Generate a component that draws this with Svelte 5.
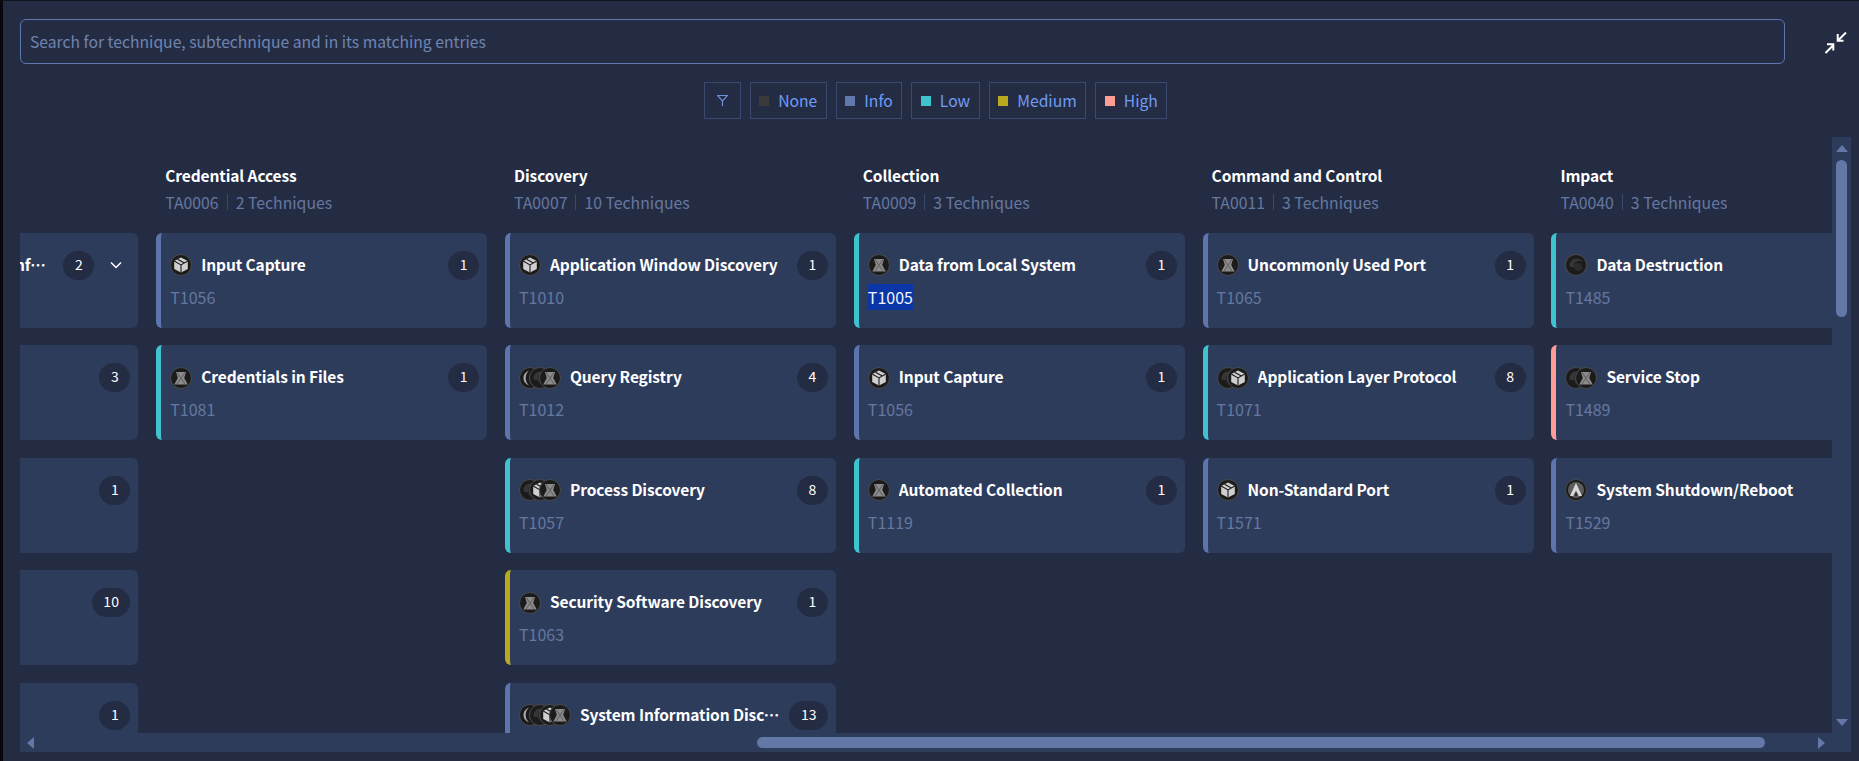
<script>
  const levels = [
    { name: 'None', color: '#3a3a3a' },
    { name: 'Info', color: '#6078ae' },
    { name: 'Low', color: '#3fc4cf' },
    { name: 'Medium', color: '#b8a91e' },
    { name: 'High', color: '#ff9d94' }
  ];

  const sev = { info: '#5d75ac', low: '#3fc4cf', medium: '#b8a91e', high: '#ff9d94' };

  const columns = [
    {
      title: 'Defense Evasion',
      sub: 'TA0005',
      count: '5 Techniques',
      items: [
        { name: 'Obfuscated Files or Information', id: 'T1027', n: 2, chevron: true, icons: ['swirl', 'x'], color: sev.info },
        { name: 'Masquerading', id: 'T1036', n: 3, icons: ['x'], color: sev.info },
        { name: 'Timestomp', id: 'T1070', n: 1, icons: ['x'], color: sev.info },
        { name: 'Process Injection', id: 'T1055', n: 10, icons: ['x'], color: sev.info },
        { name: 'Rootkit', id: 'T1014', n: 1, icons: ['x'], color: sev.info }
      ]
    },
    {
      title: 'Credential Access',
      sub: 'TA0006',
      count: '2 Techniques',
      items: [
        { name: 'Input Capture', id: 'T1056', n: 1, icons: ['box'], color: sev.info },
        { name: 'Credentials in Files', id: 'T1081', n: 1, icons: ['x'], color: sev.low }
      ]
    },
    {
      title: 'Discovery',
      sub: 'TA0007',
      count: '10 Techniques',
      items: [
        { name: 'Application Window Discovery', id: 'T1010', n: 1, icons: ['box'], color: sev.info },
        { name: 'Query Registry', id: 'T1012', n: 4, icons: ['moon', 'swirl', 'x'], color: sev.info },
        { name: 'Process Discovery', id: 'T1057', n: 8, icons: ['swirl', 'box', 'x'], color: sev.low },
        { name: 'Security Software Discovery', id: 'T1063', n: 1, icons: ['x'], color: sev.medium },
        { name: 'System Information Discovery', id: 'T1082', n: 13, icons: ['moon', 'swirl', 'box', 'x'], color: sev.info }
      ]
    },
    {
      title: 'Collection',
      sub: 'TA0009',
      count: '3 Techniques',
      items: [
        { name: 'Data from Local System', id: 'T1005', n: 1, icons: ['x'], color: sev.low, picked: true },
        { name: 'Input Capture', id: 'T1056', n: 1, icons: ['box'], color: sev.info },
        { name: 'Automated Collection', id: 'T1119', n: 1, icons: ['x'], color: sev.low }
      ]
    },
    {
      title: 'Command and Control',
      sub: 'TA0011',
      count: '3 Techniques',
      items: [
        { name: 'Uncommonly Used Port', id: 'T1065', n: 1, icons: ['x'], color: sev.info },
        { name: 'Application Layer Protocol', id: 'T1071', n: 8, icons: ['swirl', 'box'], color: sev.low },
        { name: 'Non-Standard Port', id: 'T1571', n: 1, icons: ['box'], color: sev.info }
      ]
    },
    {
      title: 'Impact',
      sub: 'TA0040',
      count: '3 Techniques',
      items: [
        { name: 'Data Destruction', id: 'T1485', n: 1, icons: ['swirl'], color: sev.low },
        { name: 'Service Stop', id: 'T1489', n: 1, icons: ['swirl', 'x'], color: sev.high },
        { name: 'System Shutdown/Reboot', id: 'T1529', n: 1, icons: ['a'], color: sev.info }
      ]
    }
  ];
</script>

<div class="page">
  <div class="search-row">
    <input class="search" placeholder="Search for technique, subtechnique and in its matching entries" />
    <button class="collapse" aria-label="collapse">
      <svg width="22" height="22" viewBox="0 0 22 22" fill="none" stroke="#fff" stroke-width="2">
        <path d="M21 .500 13 8.500M12.700 2V8.700H18.500" />
        <path d="M.500 21 8.500 13M2 12.300H8.300V18.500" />
      </svg>
    </button>
  </div>

  <div class="filters">
    <button class="chip icon-chip" aria-label="filter">
      <svg width="11" height="11" viewBox="0 0 11 11" fill="none" stroke="#6a8fd8" stroke-width="1.200">
        <path d="M.5.5h10L5.500 6zM5.500 6v5" />
      </svg>
    </button>
    {#each levels as l}
      <button class="chip">
        <span class="dot" style="background:{l.color}"></span>{l.name}
      </button>
    {/each}
  </div>

  <div class="board">
    <div class="viewport">
      <div class="columns">
        {#each columns as col}
          <section class="column">
            <header class="col-head">
              <div class="col-title">{col.title}</div>
              <div class="col-sub">
                <span>{col.sub}</span>
                <i class="sep"></i>
                <span>{col.count}</span>
              </div>
            </header>
            <div class="cards">
              {#each col.items as item}
                <article class="card" style="border-left-color:{item.color}">
                  <div class="card-top">
                    <div class="icons">
                      {#each item.icons as ic}
                        <svg class="logo" viewBox="0 0 22 22">
                          <circle cx="11" cy="11" r="10.500" fill="#1b1b1b" stroke="#4a4a4a" stroke-width="1" />
                          {#if ic === 'x'}
                            <path d="M6 5h10l-1.800 6 3.500 6.500H4.300L7.800 11z" fill="#8c8c8c" />
                            <path d="M7 5.500 15 17M15 5.500 7 17" stroke="#666" stroke-width="1.200" />
                          {:else if ic === 'box'}
                            <path d="M11 3.500l6.800 3.600v7.800L11 18.500l-6.800-3.600V7.100z" fill="#cfcfcf" />
                            <path d="M4.200 7.100 11 10.900l6.800-3.800M11 10.900v7.600M7.600 5.300l6.800 3.800" stroke="#1b1b1b" stroke-width="1.100" fill="none" />
                          {:else if ic === 'swirl'}
                            <path d="M4.500 12.500C4 7.500 8 4 12.500 4.500c3 .3 4.800 2.300 5 4.400-1.500-1.800-4.200-2.400-6.400-1.100-1.900 1.100-2.300 3.700-.9 5.300-1.900.4-4.300-.2-5.700-.6z" fill="#363636" />
                            <circle cx="13" cy="13" r="4" fill="#2b2b2b" />
                          {:else if ic === 'moon'}
                            <path d="M10 3.500C6 5.200 4.500 8.200 4.500 11s1.500 5.800 5.500 7.500C7.800 16.300 6.700 13.700 6.700 11S7.800 5.700 10 3.500z" fill="#a8a8a8" />
                            <path d="M13.500 5.500c-1.800 1.700-2.700 3.600-2.700 5.500s.9 3.800 2.700 5.500" stroke="#6a6a6a" stroke-width="1.300" fill="none" />
                          {:else}
                            <circle cx="11" cy="11" r="8" fill="#5c5c5c" />
                            <path d="M11 4 17 17h-3.200L11 11.500 8.200 17H5z" fill="#d8d8d8" />
                            <path d="M11 13l-1.300 3.500h2.600z" fill="#1b1b1b" />
                          {/if}
                        </svg>
                      {/each}
                    </div>
                    <div class="name">{item.name}</div>
                    <div class="badge">{item.n}</div>
                    {#if item.chevron}
                      <svg class="chevron" width="14" height="14" viewBox="0 0 14 14" fill="none" stroke="#fff" stroke-width="1.500">
                        <path d="M2 4.500 7 9.500 12 4.500" />
                      </svg>
                    {/if}
                  </div>
                  <div class="tid"><span class:picked={item.picked}>{item.id}</span></div>
                </article>
              {/each}
            </div>
          </section>
        {/each}
      </div>
    </div>

    <div class="vbar">
      <span class="arrow up"></span>
      <div class="vtrack"><div class="vthumb"></div></div>
      <span class="arrow down"></span>
    </div>
    <div class="hbar">
      <span class="arrow left"></span>
      <div class="htrack"><div class="hthumb"></div></div>
      <span class="arrow right"></span>
    </div>
    <div class="corner"></div>
  </div>
</div>

<style>
  :global(body) {
    margin: 0;
    background: #242c44;
  }
  .page {
    box-sizing: border-box;
    height: 761px;
    overflow: hidden;
    background: #242c44;
    border-left: 3px solid #08090d;
    border-top: 1px solid #10131d;
    font-family: "Noto Sans CJK JP", "Noto Sans", sans-serif;
    font-size: 16px;
    color: #fff;
  }
  .search-row {
    display: flex;
    align-items: center;
    padding: 18px 0 0 17px;
  }
  .search {
    box-sizing: border-box;
    width: 1765px;
    height: 45px;
    padding: 0 9px 1px;
    background: transparent;
    border: 1px solid #5c77ad;
    border-radius: 6px;
    color: #fff;
    font: inherit;
    font-size: 15.7px;
    outline: none;
  }
  .search::placeholder {
    color: #6f84b0;
    opacity: 1;
  }
  .collapse {
    display: flex;
    margin: 2px 0 0 40px;
    padding: 0;
    background: none;
    border: 0;
  }
  .filters {
    display: flex;
    justify-content: center;
    gap: 9px;
    margin: 18px 8px 0 17px;
  }
  .chip {
    display: flex;
    align-items: center;
    gap: 9px;
    box-sizing: border-box;
    height: 37px;
    padding: 0 8.5px;
    background: transparent;
    border: 1px solid #3a4a6e;
    color: #6f9cf5;
    font: inherit;
    font-size: 15.7px;
  }
  .icon-chip {
    width: 37px;
    justify-content: center;
    padding: 0;
  }
  .dot {
    width: 10px;
    height: 10px;
  }
  .board {
    display: grid;
    grid-template-columns: 1812px 19px;
    grid-template-rows: 596px 19px;
    margin: 18px 0 0 17px;
  }
  .viewport {
    overflow: hidden;
  }
  .columns {
    display: flex;
    gap: 17.8px;
    margin-left: -212.6px;
  }
  .column {
    flex: 0 0 331px;
    min-width: 0;
  }
  .col-head {
    box-sizing: border-box;
    height: 95.8px;
    padding: 25px 0 0 9px;
  }
  .col-title {
    height: 26px;
    line-height: 26px;
    font-size: 15.5px;
    font-weight: 700;
    letter-spacing: -0.1px;
  }
  .col-sub {
    display: flex;
    align-items: center;
    height: 28px;
    white-space: nowrap;
    font-size: 15.8px;
    color: #6478a0;
  }
  .sep {
    width: 1px;
    height: 16px;
    margin: 0 8px;
    background: #3a4a6e;
  }
  .cards {
    display: flex;
    flex-direction: column;
    gap: 17.5px;
  }
  .card {
    box-sizing: border-box;
    height: 95px;
    padding: 18px 8px 0 9px;
    background: #2e3c5c;
    border-left: 5px solid;
    border-radius: 6px;
  }
  .card-top {
    display: flex;
    align-items: center;
    height: 29px;
  }
  .icons {
    display: flex;
    flex: none;
    margin-right: 9px;
  }
  .logo {
    width: 22px;
    height: 22px;
  }
  .logo + .logo {
    margin-left: -12px;
  }
  .name {
    flex: 1;
    min-width: 0;
    padding-bottom: 3px;
    overflow: hidden;
    white-space: nowrap;
    text-overflow: ellipsis;
    font-size: 15.5px;
    font-weight: 700;
    letter-spacing: -0.1px;
  }
  .badge {
    flex: none;
    box-sizing: border-box;
    min-width: 31px;
    height: 29px;
    margin-left: 8px;
    padding: 0 11.5px;
    border-radius: 15px;
    background: #242c44;
    font-size: 14px;
    line-height: 27px;
    text-align: center;
  }
  .chevron {
    flex: none;
    margin: 0 7px 0 15px;
  }
  .tid {
    margin-top: 4px;
    line-height: 26px;
    color: #6478a0;
  }
  .picked {
    display: inline-block;
    background: #0a36a8;
    color: #f2f5fd;
  }
  .vbar,
  .hbar,
  .corner {
    background: #2e3c5c;
  }
  .vbar {
    display: flex;
    flex-direction: column;
    align-items: center;
    padding: 8px 0 7px;
  }
  .vtrack {
    flex: 1;
    width: 11px;
    padding-top: 8px;
  }
  .vthumb {
    height: 157px;
    border-radius: 6px;
    background: #6478a8;
  }
  .hbar {
    display: flex;
    align-items: center;
    padding: 0 7px;
  }
  .htrack {
    flex: 1;
    height: 11px;
    padding-left: 723px;
  }
  .hthumb {
    width: 1008px;
    height: 11px;
    border-radius: 6px;
    background: #6478a8;
  }
  .arrow {
    flex: none;
    width: 0;
    height: 0;
    border-style: solid;
    border-color: transparent;
  }
  .arrow.up {
    border-width: 0 6.500px 7px;
    border-bottom-color: #6478a8;
  }
  .arrow.down {
    border-width: 7px 6.500px 0;
    border-top-color: #6478a8;
  }
  .arrow.left {
    border-width: 6.500px 7px 6.500px 0;
    border-right-color: #6478a8;
  }
  .arrow.right {
    border-width: 6.500px 0 6.500px 7px;
    border-left-color: #6478a8;
  }
</style>
